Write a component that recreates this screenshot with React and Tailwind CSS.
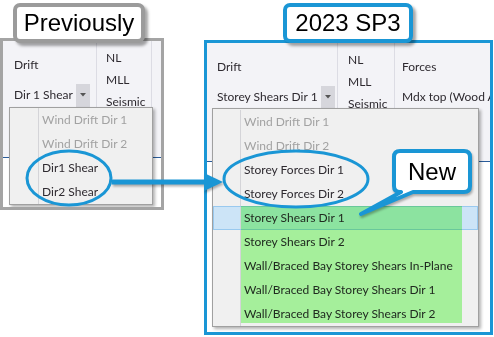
const BLUE = "#1a96d5";

const DropButton = () => (
  <div className="w-[14px] h-[23px] bg-[#d6d6dc] flex items-center justify-center">
    <svg width="6" height="4" viewBox="0 0 6 4">
      <path d="M0 0h6L3 3.5z" fill="#555" />
    </svg>
  </div>
);

const MenuRow = ({ label, muted, selected, colW }) => (
  <div
    className={`flex h-[24px] items-stretch ${
      selected ? "bg-[#cce4f7] border border-[#99c9ef]" : ""
    }`}
  >
    <div className={`${colW} border-r border-[#d4d4d8] shrink-0`} />
    <div
      className={`flex items-center pl-[3px] whitespace-nowrap ${
        muted ? "text-[#a2a2a2]" : "text-[#2e2a30]"
      }`}
    >
      {label}
    </div>
  </div>
);

const LeftPanel = () => (
  <div className="relative mt-[38px] w-[164px] h-[172px] border-[3px] border-[#a4a4a4] bg-white overflow-hidden">
    <div className="h-[117px] bg-[#f3f3f7] border-b border-[#2a5c9a] flex">
      <div className="w-[94px] border-r border-[#dcdce4] pl-[11px] pt-[16px] flex flex-col gap-[10px]">
        <div className="h-[16px] leading-[16px]">Drift</div>
        <div className="flex items-center h-[24px]">
          <div className="w-[62px] whitespace-nowrap">Dir 1 Shear</div>
          <DropButton />
        </div>
      </div>
      <div className="w-[55px] border-r border-[#dcdce4] pl-[9px] pt-[6px] flex flex-col">
        <div className="h-[22px] leading-[22px]">NL</div>
        <div className="h-[22px] leading-[22px]">MLL</div>
        <div className="h-[22px] leading-[22px]">Seismic</div>
      </div>
    </div>

    <div className="absolute left-[6px] top-[66px] w-[144px] h-[98px] bg-[#f0f0f0] border border-[#a0a0a0] shadow-[2px_2px_3px_rgba(0,0,0,0.3)]">
      <MenuRow label="Wind Drift Dir 1" muted colW="w-[29px]" />
      <MenuRow label="Wind Drift Dir 2" muted colW="w-[29px]" />
      <MenuRow label="Dir1 Shear" colW="w-[29px]" />
      <MenuRow label="Dir2 Shear" colW="w-[29px]" />
    </div>
  </div>
);

const RightPanel = () => (
  <div className="relative ml-[40px] mt-[40px] w-[289px] h-[295px] border-[3px] border-[#1a96d5] bg-white overflow-hidden">
    <div className="h-[119px] bg-[#f3f3f7] border-b border-[#2a5c9a] flex">
      <div className="w-[131px] shrink-0 border-r border-[#dcdce4] pl-[10px] pt-[16px] flex flex-col gap-[10px]">
        <div className="h-[16px] leading-[16px]">Drift</div>
        <div className="flex items-center h-[24px]">
          <div className="w-[104px] whitespace-nowrap">Storey Shears Dir 1</div>
          <DropButton />
        </div>
      </div>
      <div className="w-[57px] shrink-0 border-r border-[#dcdce4] pl-[10px] pt-[6px] flex flex-col">
        <div className="h-[22px] leading-[22px]">NL</div>
        <div className="h-[22px] leading-[22px]">MLL</div>
        <div className="h-[22px] leading-[22px]">Seismic</div>
      </div>
      <div className="min-w-0 pl-[7px] pt-[16px] flex flex-col gap-[10px] whitespace-nowrap">
        <div className="h-[16px] leading-[16px]">Forces</div>
        <div className="h-[24px] leading-[24px]">Mdx top (Wood Ar</div>
      </div>
    </div>

    <div className="absolute left-[5px] top-[65px] w-[267px] h-[219px] pt-[1px] bg-[#f0f0f0] border border-[#a0a0a0] shadow-[2px_2px_3px_rgba(0,0,0,0.3)]">
      <MenuRow label="Wind Drift Dir 1" muted colW="w-[28px]" />
      <MenuRow label="Wind Drift Dir 2" muted colW="w-[28px]" />
      <MenuRow label="Storey Forces Dir 1" colW="w-[28px]" />
      <MenuRow label="Storey Forces Dir 2" colW="w-[28px]" />
      <MenuRow label="Storey Shears Dir 1" selected colW="w-[27px]" />
      <MenuRow label="Storey Shears Dir 2" colW="w-[28px]" />
      <MenuRow label="Wall/Braced Bay Storey Shears In-Plane" colW="w-[28px]" />
      <MenuRow label="Wall/Braced Bay Storey Shears Dir 1" colW="w-[28px]" />
      <MenuRow label="Wall/Braced Bay Storey Shears Dir 2" colW="w-[28px]" />
      <div className="absolute left-[28px] top-[97px] w-[221px] h-[117px] bg-[#affea5] mix-blend-multiply" />
    </div>
  </div>
);

export default function App() {
  return (
    <div className="relative w-[494px] h-[337px] bg-white overflow-hidden font-['Lato',sans-serif] text-[12px] text-[#2e2a30]">
      <div className="flex items-start">
        <LeftPanel />
        <RightPanel />
      </div>

      <svg className="absolute left-0 top-0" width="494" height="337">
        <ellipse cx="69" cy="178" rx="42" ry="27" fill="none" stroke={BLUE} strokeWidth="3" />
        <ellipse cx="296" cy="179" rx="72" ry="28" fill="none" stroke={BLUE} strokeWidth="3" />
        <g style={{ filter: "drop-shadow(1px 2px 1px rgba(0,0,0,0.3))" }}>
          <line x1="112" y1="182" x2="206" y2="182" stroke={BLUE} strokeWidth="5" />
          <polygon points="204,173 223,182 204,191" fill={BLUE} />
          <path
            d="M400 151 H464 Q470 151 470 157 V186 Q470 192 464 192 H413 L361 214 L401 192 H400 Q394 192 394 186 V157 Q394 151 400 151 Z"
            fill="white"
            stroke={BLUE}
            strokeWidth="4"
            strokeLinejoin="round"
          />
        </g>
      </svg>

      <div className="absolute left-[394px] top-[151px] w-[76px] h-[41px] flex items-center justify-center font-['Liberation_Sans',sans-serif] text-[24px] text-black">
        New
      </div>

      <div className="absolute left-[13px] top-[3px] w-[132px] h-[40px] border-[4px] border-[#9b9b9b] rounded-[7px] bg-white shadow-[3px_3px_3px_rgba(0,0,0,0.35)] flex items-center justify-center font-['Liberation_Sans',sans-serif] text-[24px] text-black">
        Previously
      </div>
      <div className="absolute left-[283px] top-[3px] w-[130px] h-[40px] border-[4px] border-[#1a96d5] rounded-[7px] bg-white shadow-[3px_3px_3px_rgba(0,0,0,0.35)] flex items-center justify-center font-['Liberation_Sans',sans-serif] text-[24px] text-black">
        2023 SP3
      </div>
    </div>
  );
}
